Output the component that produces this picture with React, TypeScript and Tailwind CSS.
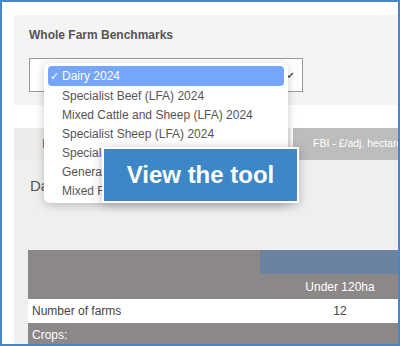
import React from "react";

const items = [
  "Specialist Beef (LFA) 2024",
  "Mixed Cattle and Sheep (LFA) 2024",
  "Specialist Sheep (LFA) 2024",
  "Specialist Sheep (Lowland) 2024",
  "General Cropping 2024",
  "Mixed Farming 2024",
];

export default function App() {
  return (
    <div
      className="relative w-[400px] h-[346px] overflow-hidden border-2 border-[#4a86c1] bg-white"
      style={{ fontFamily: '"Liberation Sans", Arial, Helvetica, sans-serif' }}
    >
      <div className="pl-[12px] pt-[13px] flex flex-col h-full">
        {/* Top panel */}
        <div className="shrink-0 bg-[#f4f4f4] h-[90px] pl-[15px] pt-[13px] flex flex-col">
          <div className="text-[12px] font-bold text-[#555] leading-[14px]">Whole Farm Benchmarks</div>
          <div className="mt-[16px] w-[274px] h-[34px] bg-white border border-[#9a9a9a] flex items-center justify-end pr-[8px]">
            <svg width="10" height="8" viewBox="0 0 10 8">
              <path d="M1 2 L5 6 L9 2" stroke="#444" strokeWidth="1.3" fill="none" />
            </svg>
          </div>
        </div>
        {/* Gap */}
        <div className="shrink-0 h-[23px] bg-white" />
        {/* Lower section */}
        <div className="flex-1 min-h-0 flex flex-col bg-[#efefef]">
          <div className="shrink-0 h-[32px] flex bg-white">
            <div className="w-[277px] bg-[#ececec] flex items-center pl-[28px] text-[12px] text-[#666]">I</div>
            <div className="flex-1 ml-[2px] bg-[#bdbdbd] flex items-center pl-[20px] text-[10.5px] text-white whitespace-nowrap overflow-hidden">
              FBI - £/adj. hectare
            </div>
          </div>
          <div className="shrink-0 pl-[16px] pt-[15px] h-[90px] text-[15px] text-[#555]">Dairy 2024</div>
          <div className="shrink-0 ml-[14px] flex flex-col">
            <div className="h-[49px] bg-[#8d8888] flex flex-col">
              <div className="h-[24px] flex">
                <div className="w-[232px]" />
                <div className="flex-1 bg-[#6983a0]" />
              </div>
              <div className="flex-1 flex items-center">
                <div className="w-[232px]" />
                <div className="flex-1 pl-[22px] text-center text-[12px] text-white">Under 120ha</div>
              </div>
            </div>
            <div className="h-[24px] bg-white flex items-center text-[12px] text-[#444]">
              <div className="w-[232px] pl-[4px]">Number of farms</div>
              <div className="flex-1 pl-[22px] text-center">12</div>
            </div>
            <div className="h-[24px] bg-[#8d8888] flex items-center text-[12px] text-white pl-[4px]">Crops:</div>
          </div>
        </div>
      </div>

      {/* Dropdown menu */}
      <div className="absolute left-[42px] top-[61px] w-[244px] h-[140px] bg-white rounded-[6px] shadow-[0_2px_10px_rgba(0,0,0,0.22)] px-[4px] pt-[3px]">
        <div className="h-[20px] rounded-[4px] bg-[#75a6f9] flex items-center text-[12px] text-white pl-[2px]">
          <span className="w-[12px] text-[11px]">✓</span>Dairy 2024
        </div>
        {items.map((t) => (
          <div key={t} className="h-[19px] flex items-center text-[12px] text-[#555] pl-[14px] whitespace-nowrap">
            {t}
          </div>
        ))}
      </div>

      {/* View the tool button */}
      <div className="absolute left-[100px] top-[145px] w-[197px] h-[56px] bg-[#3d87c6] border-2 border-white shadow-[0_2px_10px_rgba(0,0,0,0.25)] flex items-center justify-center text-white font-bold text-[24px]">
        View the tool
      </div>
    </div>
  );
}
